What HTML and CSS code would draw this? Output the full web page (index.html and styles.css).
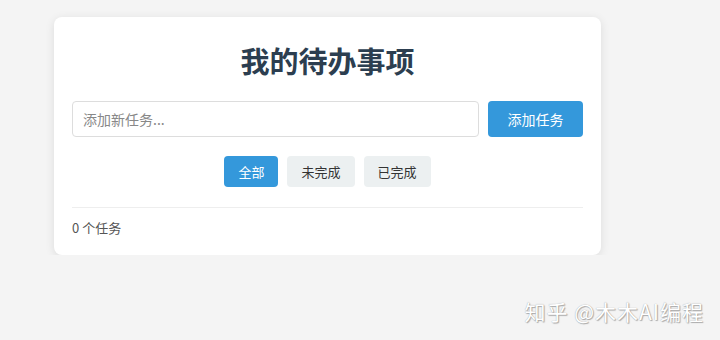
FILE: index.html
```html
<!DOCTYPE html>
<html lang="zh-CN">
<head>
  <meta charset="UTF-8">
  <meta name="viewport" content="width=device-width, initial-scale=1.0">
  <title>我的待办事项</title>
  <link rel="stylesheet" href="styles.css">
</head>
<body>
  <div class="container">
    <h1>我的待办事项</h1>

    <div class="input-row">
      <input type="text" id="taskInput" placeholder="添加新任务...">
      <button class="add-btn" onclick="addTask()">添加任务</button>
    </div>

    <div class="filters">
      <button class="filter active">全部</button>
      <button class="filter">未完成</button>
      <button class="filter">已完成</button>
    </div>

    <ul class="task-list" id="taskList"></ul>

    <div class="footer" id="taskCount">0 个任务</div>
  </div>

  <div class="watermark">知乎 @木木AI编程</div>

  <script>
    let tasks = [];

    function addTask() {
      const input = document.getElementById("taskInput");
      const text = input.value.trim();
      if (!text) return;
      tasks.push({ text, done: false });
      input.value = "";
      render();
    }

    function render() {
      const list = document.getElementById("taskList");
      list.innerHTML = "";
      tasks.forEach(t => {
        const li = document.createElement("li");
        li.textContent = t.text;
        list.appendChild(li);
      });
      document.getElementById("taskCount").textContent = `${tasks.length} 个任务`;
    }
  </script>
</body>
</html>
```

FILE: styles.css
```css
body {
  margin: 0;
  padding: 17px 0 0 54px;
  font-family: "Noto Sans CJK SC", "Noto Sans", sans-serif;
  background-color: #f4f4f4;
  color: #333;
}
.container {
  width: 511px;
  padding: 22px 18px 17px;
  background: #fff;
  border-radius: 8px;
  box-shadow: 0 2px 10px rgba(0, 0, 0, 0.1);
}
h1 {
  margin: 0 0 20px;
  font-size: 29px;
  line-height: 42px;
  text-align: center;
  color: #2c3e50;
}
.input-row {
  display: flex;
  gap: 9px;
}
.input-row input {
  flex: 1;
  height: 36px;
  box-sizing: border-box;
  padding: 0 10px;
  font-family: inherit;
  font-size: 14px;
  border: 1px solid #ddd;
  border-radius: 4px;
  outline: none;
}
.input-row input::placeholder {
  color: #888;
}
button {
  font-family: inherit;
  border: none;
  border-radius: 4px;
  cursor: pointer;
}
.add-btn {
  width: 95px;
  height: 36px;
  font-size: 14px;
  color: #fff;
  background: #3498db;
}
.filters {
  display: flex;
  justify-content: center;
  gap: 9px;
  margin-top: 19px;
}
.filter {
  height: 31px;
  padding: 0 14px;
  font-size: 13px;
  color: #333;
  background: #ecf0f1;
}
.filter.active {
  color: #fff;
  background: #3498db;
}
.task-list {
  list-style: none;
  margin: 0;
  padding: 0;
  min-height: 20px;
  border-bottom: 1px solid #eee;
}
.footer {
  padding-top: 10px;
  font-size: 13px;
  line-height: 20px;
  color: #555;
}
.watermark {
  position: absolute;
  right: 16px;
  bottom: 17px;
  font-size: 21px;
  line-height: 24px;
  letter-spacing: 1px;
  color: #fff;
  text-shadow: 0 0 1px #999, 1px 1px 1px #aaa;
}
```
